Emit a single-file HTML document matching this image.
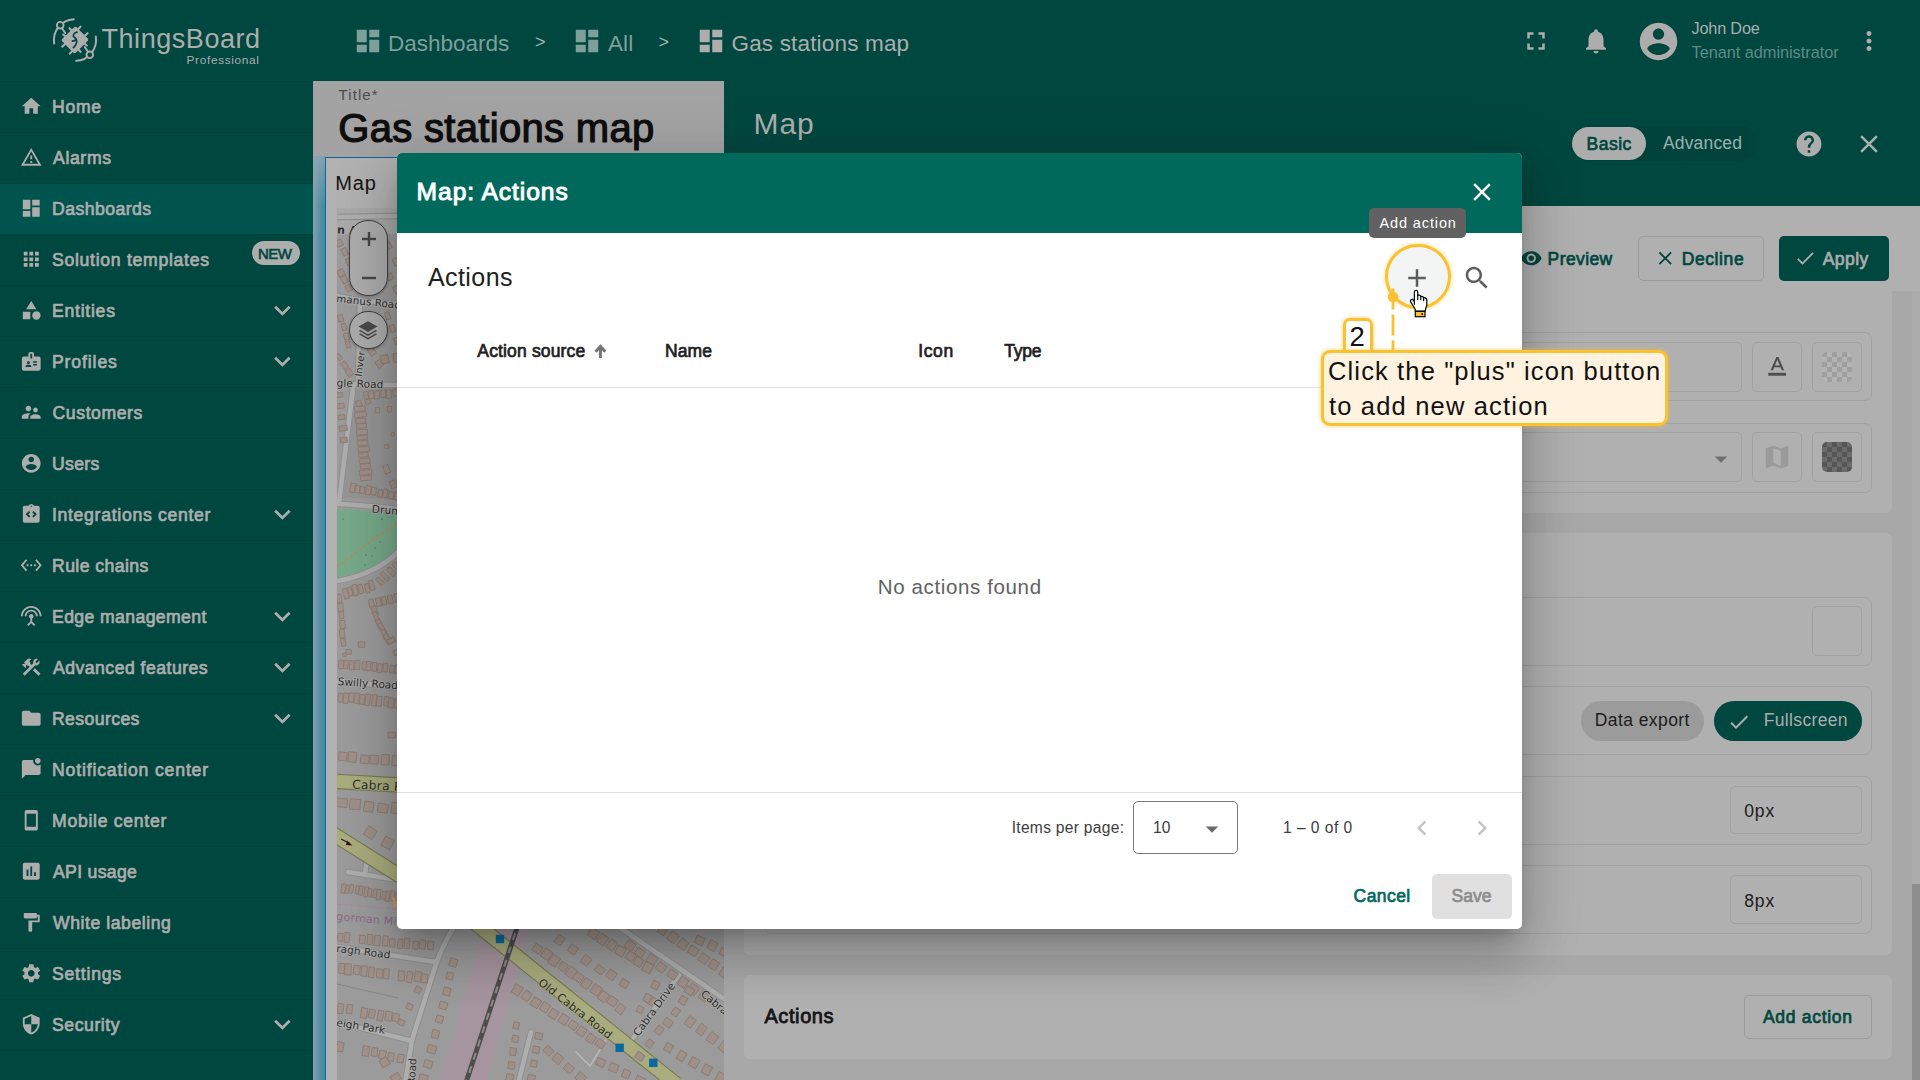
<!DOCTYPE html>
<html lang="en"><head><meta charset="utf-8"><title>ThingsBoard - Map: Actions</title>
<style>
*{box-sizing:border-box;margin:0;padding:0}
html,body{width:1920px;height:1080px;overflow:hidden;background:#a3a3a3;font-family:"Liberation Sans",sans-serif;}
.layer{position:absolute;left:0;top:0;width:1920px;height:1080px;overflow:hidden;}
.bx{position:absolute;}
.ic{position:absolute;overflow:visible;}
.t{position:absolute;white-space:pre;line-height:1;font-weight:400;text-decoration:none;}
.m{-webkit-text-stroke:0.04em currentColor;}
.m2{-webkit-text-stroke:0.03em currentColor;}
.b{font-weight:700;}
.widget{background:#b1b1b1;border:1.400px solid #0b68a3;}
.zoomctl{background:#acacac;border:1.200px solid #424242;border-radius:19px;box-shadow:0 1px 3px rgba(0,0,0,.3);}
.row{border:1px solid #a1a1a1;border-radius:7px;}
.fld{border:1px solid #a1a1a1;border-radius:5px;}
.checker{border-radius:5px;background-size:10px 10px;background-position:0 0;}
.checker.light{background-color:#9f9f9f;background-image:conic-gradient(#b4b4b4 25%,transparent 0 50%,#b4b4b4 0 75%,transparent 0);}
.checker.dark{background-color:#565656;background-image:conic-gradient(#6b6b6b 25%,transparent 0 50%,#6b6b6b 0 75%,transparent 0);}
.dialog{background:#fff;border-radius:5px;box-shadow:0 14px 19px -9px rgba(0,0,0,.2),0 30px 48px 4px rgba(0,0,0,.14),0 11px 58px 10px rgba(0,0,0,.12);}
</style></head>
<body>
<section class="layer leftpanel" style="clip-path:inset(81px 1196px 0 313px);"><div class="bx" style="left:313.00px;top:81.00px;width:411.00px;height:999.00px;background:#a3a3a3;"></div><span class="t" id="t0" style="left:338.60px;top:87.00px;font-size:15.00px;color:#4d4d4d;letter-spacing:1.062px;">Title*</span><h1 class="t m2" id="t1" style="left:338.23px;top:108.00px;font-size:40.00px;color:#0e0e0e;letter-spacing:0.318px;">Gas stations map</h1><div class="layer dashboard" style="clip-path:inset(156px 1196px 0 313px);"><div class="bx" style="left:313.00px;top:156.00px;width:12.50px;height:924.00px;background:linear-gradient(to right,#87a0ac,#5a91a5 50%,#328aa2);"></div><div class="bx" style="left:313.00px;top:156.00px;width:12.50px;height:50.00px;background:linear-gradient(to bottom,rgba(142,166,178,.85),rgba(142,166,178,0));"></div><div class="bx widget" style="left:324.80px;top:156.60px;width:575.20px;height:1043.40px;"></div><span class="t" id="t2" style="left:335.30px;top:173.00px;font-size:20.00px;color:#141414;letter-spacing:0.850px;">Map</span><svg class="ic mapsvg" viewBox="337 208 400 872" style="left:337px;top:208px;width:400px;height:872px;overflow:hidden;font-family:'DejaVu Sans','Liberation Sans',sans-serif;"><rect x="337" y="208" width="400" height="872" fill="#9b9b9b"/><path d="M356 390L397 388V500L343 498z" fill="#959595"/><rect x="337" y="208" width="400" height="26" fill="#a9a9a9"/><path d="M337 509L397 513V549C380 566 358 574 337 577z" fill="#77a98a"/><path d="M337 567L352 556L372 540L397 524" stroke="#c0875e" stroke-width="1.6" stroke-dasharray="3 2.5" fill="none"/><g fill="#5f9272"><circle cx="343.0" cy="519.0" r="1.1"/><circle cx="382.0" cy="519.0" r="1.1"/><circle cx="388.0" cy="568.0" r="1.1"/><circle cx="366.0" cy="555.0" r="1.1"/><circle cx="375.0" cy="548.0" r="1.1"/><circle cx="380.0" cy="542.0" r="1.1"/><circle cx="372.0" cy="556.0" r="1.1"/><circle cx="365.0" cy="565.0" r="1.1"/></g><path d="M487 920L531 920L487 1080L441 1080z" fill="#a6959f"/><g fill="none" stroke-linecap="round" stroke-linejoin="round"><g stroke="#8f8f8f" stroke-width="6.5"><path d="M337 217L397 216"/><path d="M337 296C355 300 378 303 397 304"/><path d="M360 300L358 384"/><path d="M337 384L397 385"/><path d="M353 388L339 502"/><path d="M337 504C360 505 380 507 397 509"/><path d="M337 581C362 577 384 566 397 553"/><path d="M337 681L397 687"/><path d="M348 872L392 879M367 858L365 875"/><path d="M337 947L436 962"/><path d="M455 925C446 940 440 952 436 964L412 1040L405 1084"/><path d="M337 1022L412 1041"/><path d="M616 925L730 1003"/><path d="M679 975L628 1045"/><path d="M531 1032L518 1084"/></g><g stroke="#aeaeae" stroke-width="4.6"><path d="M337 217L397 216"/><path d="M337 296C355 300 378 303 397 304"/><path d="M360 300L358 384"/><path d="M337 384L397 385"/><path d="M353 388L339 502"/><path d="M337 504C360 505 380 507 397 509"/><path d="M337 581C362 577 384 566 397 553"/><path d="M337 681L397 687"/><path d="M348 872L392 879M367 858L365 875"/><path d="M337 947L436 962"/><path d="M455 925C446 940 440 952 436 964L412 1040L405 1084"/><path d="M337 1022L412 1041"/><path d="M616 925L730 1003"/><path d="M679 975L628 1045"/><path d="M531 1032L518 1084"/></g><path d="M576 1052L590 1066L606 1040" stroke="#b8b8b8" stroke-width="1.6"/><path d="M337 984L398 998" stroke="#858585" stroke-width="1"/><path d="M337 904L397 909" stroke="#a98aa0" stroke-width="1.2" stroke-dasharray="4 3"/></g><g fill="none"><g stroke="#777b4d" stroke-width="15.5"><path d="M330 781L400 785"/><path d="M330 832L400 876"/><path d="M470 919L676 1084"/></g><g stroke="#a9ac7d" stroke-width="13.2"><path d="M330 781L400 785"/><path d="M330 832L400 876"/><path d="M470 919L676 1084"/></g></g><path d="M519.500 920L465.500 1084" stroke="#4d4d4d" stroke-width="5" fill="none"/><path d="M519.500 920L465.500 1084" stroke="#8c8c8c" stroke-width="2" stroke-dasharray="7 7" fill="none"/><g fill="#9f9089" stroke="#8c7c74" stroke-width="0.9"><rect x="336.2" y="240.2" width="6.4" height="6.1" transform="rotate(63.8 339.4 243.2)"/><rect x="341.1" y="249.1" width="6.9" height="5.2" transform="rotate(62.2 344.5 251.8)"/><rect x="346.2" y="258.3" width="6.6" height="6.2" transform="rotate(67.3 349.5 261.4)"/><rect x="337.7" y="269.4" width="6.4" height="6.6" transform="rotate(62.2 340.8 272.8)"/><rect x="340.7" y="277.0" width="7.4" height="5.4" transform="rotate(63.9 344.4 279.7)"/><rect x="345.6" y="285.5" width="6.4" height="5.2" transform="rotate(61.7 348.8 288.1)"/><rect x="384.3" y="242.7" width="7.1" height="5.9" transform="rotate(62.2 387.9 245.7)"/><rect x="392.8" y="258.6" width="7.1" height="6.0" transform="rotate(65.7 396.3 261.6)"/><rect x="386.4" y="273.8" width="6.5" height="5.9" transform="rotate(65.0 389.7 276.8)"/><rect x="393.4" y="286.0" width="7.2" height="6.5" transform="rotate(63.9 397.0 289.3)"/><rect x="337.1" y="315.8" width="7.1" height="5.1" transform="rotate(75.2 340.7 318.3)"/><rect x="340.4" y="324.8" width="7.2" height="4.3" transform="rotate(76.7 344.0 327.0)"/><rect x="343.1" y="334.1" width="6.7" height="4.8" transform="rotate(76.5 346.5 336.5)"/><rect x="344.7" y="342.3" width="6.5" height="4.3" transform="rotate(77.1 347.9 344.5)"/><rect x="383.8" y="313.6" width="7.5" height="4.4" transform="rotate(71.3 387.6 315.8)"/><rect x="388.9" y="326.2" width="7.5" height="4.7" transform="rotate(71.1 392.6 328.5)"/><rect x="393.4" y="338.5" width="6.5" height="4.5" transform="rotate(70.0 396.6 340.7)"/><rect x="335.6" y="355.0" width="6.7" height="4.3" transform="rotate(53.3 339.0 357.1)"/><rect x="341.0" y="362.7" width="7.3" height="5.0" transform="rotate(54.5 344.6 365.2)"/><rect x="345.6" y="369.9" width="7.4" height="5.6" transform="rotate(55.5 349.3 372.6)"/><rect x="367.7" y="348.3" width="8.2" height="6.1" transform="rotate(53.7 371.8 351.4)"/><rect x="375.8" y="360.8" width="7.3" height="6.0" transform="rotate(54.2 379.5 363.7)"/><rect x="381.0" y="355.1" width="7.5" height="8.3" transform="rotate(-11.6 384.8 359.2)"/><rect x="393.5" y="353.4" width="6.5" height="8.8" transform="rotate(-6.5 396.8 357.8)"/><rect x="363.9" y="391.8" width="4.2" height="7.1" transform="rotate(-7.3 366.0 395.3)"/><rect x="368.8" y="390.9" width="5.0" height="7.6" transform="rotate(-8.0 371.3 394.6)"/><rect x="374.3" y="390.7" width="5.0" height="8.3" transform="rotate(-4.7 376.8 394.8)"/><rect x="380.8" y="389.9" width="4.9" height="7.6" transform="rotate(-4.2 383.2 393.7)"/><rect x="386.2" y="390.0" width="5.0" height="8.3" transform="rotate(-4.1 388.8 394.1)"/><rect x="393.1" y="389.0" width="4.6" height="7.2" transform="rotate(-8.7 395.4 392.6)"/><rect x="356.1" y="400.8" width="5.2" height="5.7" transform="rotate(-20.9 358.6 403.6)"/><rect x="365.3" y="399.4" width="4.9" height="4.6" transform="rotate(-22.2 367.8 401.7)"/><rect x="375.4" y="407.4" width="4.3" height="5.5" transform="rotate(-0.1 377.5 410.2)"/><rect x="387.4" y="406.5" width="4.1" height="5.6" transform="rotate(1.7 389.5 409.3)"/><rect x="357.5" y="403.5" width="4.9" height="10.4" transform="rotate(86.8 360.0 408.7)"/><rect x="357.9" y="408.8" width="5.0" height="11.7" transform="rotate(83.1 360.4 414.7)"/><rect x="358.2" y="416.0" width="4.9" height="9.8" transform="rotate(87.0 360.7 420.9)"/><rect x="359.3" y="421.2" width="4.6" height="9.8" transform="rotate(82.1 361.7 426.1)"/><rect x="359.7" y="426.6" width="5.0" height="10.8" transform="rotate(87.3 362.1 432.0)"/><rect x="360.0" y="432.4" width="4.4" height="10.1" transform="rotate(85.5 362.2 437.5)"/><rect x="360.4" y="437.9" width="5.0" height="10.5" transform="rotate(84.8 362.9 443.1)"/><rect x="361.4" y="443.7" width="5.0" height="11.0" transform="rotate(85.2 363.9 449.2)"/><rect x="361.4" y="450.3" width="4.3" height="9.4" transform="rotate(86.8 363.5 454.9)"/><rect x="362.1" y="455.8" width="4.7" height="10.4" transform="rotate(85.1 364.5 461.0)"/><rect x="363.0" y="461.0" width="4.7" height="10.2" transform="rotate(83.7 365.3 466.1)"/><rect x="363.1" y="466.1" width="4.8" height="12.4" transform="rotate(84.7 365.5 472.3)"/><rect x="363.6" y="472.6" width="4.8" height="10.8" transform="rotate(85.2 366.0 478.0)"/><rect x="391.1" y="432.6" width="3.2" height="3.4" transform="rotate(-1.4 392.7 434.3)"/><rect x="384.4" y="444.8" width="4.6" height="3.5" transform="rotate(-0.3 386.7 446.5)"/><rect x="382.4" y="466.6" width="8.3" height="5.4" transform="rotate(69.2 386.6 469.3)"/><rect x="389.6" y="481.5" width="7.4" height="5.6" transform="rotate(69.6 393.3 484.3)"/><rect x="350.4" y="483.2" width="4.6" height="9.2" transform="rotate(12.3 352.7 487.8)"/><rect x="355.2" y="485.4" width="4.5" height="7.3" transform="rotate(9.2 357.4 489.0)"/><rect x="360.0" y="486.7" width="4.5" height="6.8" transform="rotate(9.3 362.2 490.1)"/><rect x="366.0" y="486.0" width="5.0" height="8.7" transform="rotate(13.1 368.5 490.3)"/><rect x="371.2" y="487.5" width="4.9" height="7.4" transform="rotate(8.1 373.6 491.3)"/><rect x="378.0" y="489.9" width="4.4" height="7.2" transform="rotate(12.8 380.2 493.5)"/><rect x="383.2" y="489.1" width="4.2" height="8.5" transform="rotate(9.9 385.3 493.3)"/><rect x="388.8" y="491.7" width="4.9" height="7.0" transform="rotate(12.4 391.2 495.2)"/><rect x="394.4" y="491.9" width="4.5" height="8.1" transform="rotate(12.9 396.6 495.9)"/><rect x="337.0" y="392.0" width="4.7" height="6.2" transform="rotate(82.9 339.4 395.0)"/><rect x="338.1" y="402.2" width="4.8" height="7.5" transform="rotate(83.7 340.5 405.9)"/><rect x="339.2" y="414.0" width="4.5" height="6.5" transform="rotate(82.0 341.5 417.3)"/><rect x="340.6" y="424.3" width="5.0" height="7.9" transform="rotate(82.6 343.1 428.3)"/><rect x="341.2" y="436.6" width="5.3" height="6.8" transform="rotate(85.0 343.9 440.0)"/><rect x="343.4" y="588.4" width="4.7" height="10.6" transform="rotate(-15.7 345.8 593.7)"/><rect x="348.1" y="587.3" width="4.1" height="8.7" transform="rotate(-15.1 350.2 591.7)"/><rect x="352.9" y="584.6" width="4.7" height="11.1" transform="rotate(-15.5 355.3 590.1)"/><rect x="358.6" y="584.4" width="4.4" height="9.0" transform="rotate(-16.8 360.8 588.9)"/><rect x="365.1" y="583.7" width="4.4" height="9.2" transform="rotate(-13.7 367.3 588.4)"/><rect x="369.6" y="580.2" width="4.3" height="9.9" transform="rotate(-16.5 371.8 585.2)"/><rect x="377.9" y="576.8" width="4.2" height="8.8" transform="rotate(-43.9 380.0 581.2)"/><rect x="382.8" y="571.2" width="4.2" height="10.3" transform="rotate(-43.1 384.9 576.4)"/><rect x="389.2" y="566.8" width="4.7" height="9.7" transform="rotate(-44.3 391.6 571.7)"/><rect x="394.2" y="562.0" width="4.5" height="8.6" transform="rotate(-41.3 396.4 566.4)"/><rect x="335.0" y="596.1" width="8.5" height="4.5" transform="rotate(83.7 339.2 598.4)"/><rect x="336.3" y="604.7" width="8.5" height="5.1" transform="rotate(85.9 340.5 607.3)"/><rect x="337.7" y="612.9" width="7.2" height="4.4" transform="rotate(82.7 341.3 615.2)"/><rect x="338.4" y="621.9" width="8.2" height="5.2" transform="rotate(84.6 342.5 624.5)"/><rect x="338.0" y="631.2" width="8.4" height="5.0" transform="rotate(83.7 342.2 633.7)"/><rect x="339.5" y="640.2" width="7.6" height="4.4" transform="rotate(82.1 343.3 642.4)"/><rect x="369.0" y="599.4" width="5.0" height="8.0" transform="rotate(-12.0 371.5 603.4)"/><rect x="376.2" y="598.0" width="4.7" height="8.3" transform="rotate(-13.8 378.5 602.2)"/><rect x="381.9" y="596.8" width="4.4" height="8.2" transform="rotate(-14.2 384.1 600.9)"/><rect x="388.0" y="595.3" width="4.8" height="8.4" transform="rotate(-12.6 390.4 599.5)"/><rect x="394.8" y="593.5" width="4.2" height="8.9" transform="rotate(-13.1 396.9 597.9)"/><rect x="369.7" y="608.8" width="9.9" height="4.8" transform="rotate(67.9 374.7 611.2)"/><rect x="370.8" y="615.1" width="10.9" height="4.0" transform="rotate(65.6 376.2 617.1)"/><rect x="374.6" y="621.5" width="9.3" height="4.8" transform="rotate(65.1 379.2 623.9)"/><rect x="376.7" y="626.2" width="10.8" height="4.4" transform="rotate(62.2 382.1 628.4)"/><rect x="379.6" y="632.4" width="9.6" height="3.9" transform="rotate(64.2 384.4 634.3)"/><rect x="382.3" y="636.8" width="10.5" height="4.8" transform="rotate(62.8 387.5 639.2)"/><rect x="388.9" y="636.8" width="4.8" height="7.7" transform="rotate(62.8 391.3 640.6)"/><rect x="394.7" y="648.0" width="4.9" height="7.5" transform="rotate(60.7 397.1 651.8)"/><rect x="358.3" y="641.9" width="6.5" height="5.5" transform="rotate(-1.4 361.5 644.7)"/><rect x="345.8" y="649.6" width="5.5" height="4.5" transform="rotate(1.9 348.5 651.8)"/><rect x="342.6" y="653.1" width="4.0" height="3.2" transform="rotate(-2.7 344.7 654.7)"/><rect x="338.6" y="660.2" width="4.7" height="8.4" transform="rotate(2.4 340.9 664.4)"/><rect x="343.8" y="660.2" width="4.5" height="8.5" transform="rotate(6.5 346.0 664.5)"/><rect x="349.6" y="660.7" width="4.4" height="9.2" transform="rotate(4.5 351.8 665.2)"/><rect x="354.8" y="660.5" width="5.0" height="9.0" transform="rotate(3.4 357.3 665.0)"/><rect x="362.1" y="661.8" width="4.3" height="8.2" transform="rotate(2.6 364.2 665.9)"/><rect x="366.2" y="661.5" width="4.4" height="9.2" transform="rotate(7.4 368.3 666.1)"/><rect x="372.1" y="662.5" width="4.6" height="8.7" transform="rotate(4.1 374.5 666.9)"/><rect x="377.7" y="663.7" width="4.3" height="9.0" transform="rotate(5.9 379.8 668.2)"/><rect x="383.2" y="663.3" width="4.4" height="8.7" transform="rotate(4.8 385.3 667.6)"/><rect x="389.9" y="665.2" width="4.2" height="7.7" transform="rotate(6.4 392.0 669.1)"/><rect x="394.9" y="664.8" width="4.1" height="8.7" transform="rotate(7.7 397.0 669.1)"/><rect x="338.3" y="693.3" width="4.6" height="8.8" transform="rotate(3.9 340.6 697.8)"/><rect x="343.5" y="693.1" width="5.0" height="10.4" transform="rotate(7.6 346.0 698.3)"/><rect x="348.9" y="692.9" width="5.1" height="9.2" transform="rotate(8.5 351.5 697.5)"/><rect x="354.5" y="693.0" width="4.6" height="10.4" transform="rotate(7.2 356.8 698.2)"/><rect x="359.7" y="694.6" width="4.9" height="9.7" transform="rotate(4.4 362.1 699.4)"/><rect x="365.3" y="694.0" width="4.8" height="11.4" transform="rotate(6.9 367.7 699.7)"/><rect x="371.9" y="694.5" width="4.6" height="11.4" transform="rotate(7.2 374.2 700.2)"/><rect x="376.7" y="696.3" width="5.0" height="9.8" transform="rotate(4.6 379.1 701.2)"/><rect x="384.1" y="696.6" width="4.4" height="9.5" transform="rotate(5.5 386.3 701.4)"/><rect x="388.3" y="697.9" width="5.0" height="10.0" transform="rotate(4.2 390.8 702.9)"/><rect x="394.4" y="698.9" width="4.5" height="9.2" transform="rotate(7.6 396.7 703.5)"/><rect x="388.0" y="732.2" width="7.5" height="5.5" transform="rotate(-0.5 391.7 735.0)"/><rect x="338.6" y="752.3" width="8.3" height="8.2" transform="rotate(7.0 342.7 756.4)"/><rect x="348.1" y="752.1" width="8.3" height="10.1" transform="rotate(6.5 352.3 757.1)"/><rect x="360.7" y="755.2" width="8.2" height="8.2" transform="rotate(6.8 364.8 759.3)"/><rect x="370.1" y="755.3" width="8.3" height="8.7" transform="rotate(3.1 374.3 759.7)"/><rect x="381.1" y="754.7" width="8.2" height="10.2" transform="rotate(1.9 385.2 759.8)"/><rect x="392.0" y="755.8" width="9.0" height="9.9" transform="rotate(3.8 396.5 760.8)"/><rect x="336.5" y="798.5" width="10.8" height="8.6" transform="rotate(5.4 342.0 802.8)"/><rect x="349.7" y="799.2" width="10.6" height="10.3" transform="rotate(3.5 355.0 804.4)"/><rect x="364.0" y="801.6" width="9.5" height="10.2" transform="rotate(8.6 368.8 806.7)"/><rect x="377.8" y="803.8" width="10.2" height="8.8" transform="rotate(7.5 382.9 808.2)"/><rect x="391.4" y="802.9" width="10.5" height="10.7" transform="rotate(7.0 396.6 808.2)"/><rect x="365.3" y="827.5" width="10.0" height="10.2" transform="rotate(33.2 370.2 832.6)"/><rect x="382.6" y="837.8" width="10.0" height="10.2" transform="rotate(28.6 387.6 842.9)"/><rect x="341.4" y="883.9" width="4.0" height="9.3" transform="rotate(8.4 343.4 888.5)"/><rect x="345.5" y="885.1" width="3.5" height="8.2" transform="rotate(11.0 347.3 889.2)"/><rect x="349.4" y="884.5" width="3.8" height="8.5" transform="rotate(12.3 351.3 888.8)"/><rect x="355.5" y="885.9" width="3.5" height="7.9" transform="rotate(9.5 357.3 889.9)"/><rect x="359.0" y="885.9" width="3.7" height="9.3" transform="rotate(10.5 360.9 890.6)"/><rect x="364.3" y="887.1" width="3.5" height="9.9" transform="rotate(8.2 366.1 892.0)"/><rect x="368.0" y="888.7" width="3.6" height="8.3" transform="rotate(7.9 369.8 892.9)"/><rect x="373.3" y="889.0" width="3.7" height="8.7" transform="rotate(12.4 375.1 893.4)"/><rect x="376.6" y="889.3" width="3.9" height="10.3" transform="rotate(7.1 378.6 894.5)"/><rect x="382.0" y="891.4" width="4.1" height="7.8" transform="rotate(8.2 384.0 895.3)"/><rect x="385.6" y="891.2" width="3.9" height="10.2" transform="rotate(8.7 387.5 896.3)"/><rect x="390.4" y="890.8" width="4.0" height="10.2" transform="rotate(7.1 392.4 895.9)"/><rect x="395.3" y="892.5" width="3.7" height="8.0" transform="rotate(7.7 397.2 896.5)"/><rect x="337.6" y="933.4" width="5.2" height="7.7" transform="rotate(4.7 340.2 937.2)"/><rect x="344.4" y="932.6" width="5.2" height="9.8" transform="rotate(6.0 347.0 937.4)"/><rect x="359.5" y="935.4" width="5.7" height="7.9" transform="rotate(3.7 362.3 939.3)"/><rect x="367.2" y="934.5" width="5.3" height="10.2" transform="rotate(4.6 369.9 939.7)"/><rect x="374.3" y="935.4" width="5.9" height="10.3" transform="rotate(4.9 377.3 940.6)"/><rect x="382.9" y="936.0" width="5.0" height="10.1" transform="rotate(5.3 385.4 941.0)"/><rect x="389.6" y="938.8" width="5.5" height="8.1" transform="rotate(2.8 392.3 942.9)"/><rect x="397.7" y="939.0" width="5.0" height="9.3" transform="rotate(4.9 400.2 943.7)"/><rect x="404.2" y="938.3" width="5.5" height="10.1" transform="rotate(3.4 406.9 943.4)"/><rect x="412.9" y="941.3" width="5.2" height="8.0" transform="rotate(8.4 415.5 945.2)"/><rect x="419.5" y="940.2" width="6.0" height="8.7" transform="rotate(8.1 422.5 944.5)"/><rect x="427.6" y="941.3" width="5.8" height="8.2" transform="rotate(5.1 430.5 945.5)"/><rect x="338.7" y="963.6" width="5.7" height="9.7" transform="rotate(6.2 341.5 968.5)"/><rect x="344.9" y="963.8" width="6.3" height="11.2" transform="rotate(3.4 348.0 969.4)"/><rect x="353.5" y="965.5" width="6.4" height="8.9" transform="rotate(6.7 356.7 969.9)"/><rect x="361.2" y="966.0" width="5.9" height="10.2" transform="rotate(5.7 364.1 971.1)"/><rect x="368.7" y="967.0" width="5.4" height="10.4" transform="rotate(6.1 371.5 972.2)"/><rect x="376.6" y="969.0" width="5.9" height="9.0" transform="rotate(6.0 379.6 973.5)"/><rect x="383.5" y="968.9" width="5.5" height="9.8" transform="rotate(6.2 386.2 973.8)"/><rect x="398.3" y="970.9" width="6.3" height="10.0" transform="rotate(3.4 401.4 975.9)"/><rect x="406.8" y="971.5" width="5.6" height="11.1" transform="rotate(9.1 409.5 977.1)"/><rect x="414.6" y="971.7" width="6.6" height="10.0" transform="rotate(8.9 417.9 976.7)"/><rect x="421.2" y="974.1" width="6.5" height="8.7" transform="rotate(5.2 424.5 978.5)"/><rect x="337.6" y="1003.7" width="5.7" height="9.9" transform="rotate(8.2 340.5 1008.6)"/><rect x="346.7" y="1004.5" width="5.7" height="9.0" transform="rotate(9.2 349.5 1009.0)"/><rect x="360.9" y="1008.0" width="6.2" height="10.1" transform="rotate(8.3 364.0 1013.0)"/><rect x="368.7" y="1009.5" width="6.2" height="8.6" transform="rotate(12.5 371.8 1013.8)"/><rect x="377.7" y="1010.6" width="5.5" height="10.3" transform="rotate(11.1 380.4 1015.8)"/><rect x="385.3" y="1011.6" width="6.6" height="9.2" transform="rotate(9.5 388.6 1016.2)"/><rect x="392.8" y="1013.6" width="6.3" height="7.8" transform="rotate(12.2 395.9 1017.5)"/><rect x="336.9" y="1042.1" width="6.6" height="9.4" transform="rotate(10.2 340.2 1046.8)"/><rect x="362.6" y="1046.0" width="6.5" height="10.1" transform="rotate(9.1 365.9 1051.0)"/><rect x="371.6" y="1047.8" width="5.9" height="8.6" transform="rotate(8.9 374.5 1052.1)"/><rect x="379.1" y="1050.6" width="6.6" height="8.2" transform="rotate(12.1 382.4 1054.7)"/><rect x="387.8" y="1053.0" width="6.2" height="8.1" transform="rotate(8.9 390.8 1057.0)"/><rect x="397.4" y="1054.3" width="6.4" height="8.4" transform="rotate(8.4 400.6 1058.5)"/><rect x="415.0" y="986.8" width="6.2" height="5.9" transform="rotate(119.2 418.1 989.8)"/><rect x="406.9" y="1003.6" width="5.5" height="6.1" transform="rotate(116.0 409.6 1006.6)"/><rect x="398.6" y="1019.4" width="5.4" height="6.1" transform="rotate(119.2 401.3 1022.4)"/><rect x="380.5" y="1058.0" width="8.0" height="8.3" transform="rotate(57.4 384.5 1062.2)"/><rect x="392.1" y="1073.2" width="7.3" height="8.9" transform="rotate(57.2 395.7 1077.7)"/><rect x="449.3" y="958.8" width="7.9" height="7.4" transform="rotate(106.0 453.2 962.6)"/><rect x="446.3" y="972.6" width="7.1" height="6.5" transform="rotate(103.5 449.8 975.9)"/><rect x="442.9" y="988.1" width="7.8" height="7.0" transform="rotate(104.8 446.8 991.6)"/><rect x="439.6" y="1001.6" width="7.1" height="7.8" transform="rotate(107.3 443.2 1005.5)"/><rect x="436.0" y="1015.8" width="7.1" height="6.9" transform="rotate(106.0 439.6 1019.2)"/><rect x="431.6" y="1030.7" width="8.1" height="7.1" transform="rotate(102.9 435.6 1034.2)"/><rect x="427.8" y="1045.0" width="7.7" height="8.6" transform="rotate(104.3 431.7 1049.3)"/><rect x="424.4" y="1060.1" width="7.4" height="8.0" transform="rotate(104.9 428.1 1064.1)"/><rect x="420.1" y="1074.0" width="6.9" height="8.4" transform="rotate(102.4 423.5 1078.2)"/><rect x="533.3" y="944.7" width="8.2" height="8.0" transform="rotate(33.4 537.4 948.7)"/><rect x="542.1" y="949.4" width="8.8" height="9.6" transform="rotate(33.6 546.5 954.2)"/><rect x="549.7" y="955.5" width="9.0" height="10.1" transform="rotate(33.6 554.2 960.5)"/><rect x="559.3" y="962.6" width="7.8" height="8.2" transform="rotate(33.9 563.3 966.7)"/><rect x="567.0" y="967.6" width="8.7" height="9.9" transform="rotate(37.0 571.4 972.5)"/><rect x="573.9" y="973.3" width="8.9" height="8.2" transform="rotate(35.1 578.4 977.4)"/><rect x="582.4" y="978.8" width="8.1" height="9.6" transform="rotate(35.4 586.4 983.6)"/><rect x="591.6" y="985.3" width="9.1" height="9.3" transform="rotate(33.4 596.1 990.0)"/><rect x="599.4" y="991.7" width="8.2" height="9.6" transform="rotate(36.4 603.5 996.4)"/><rect x="607.9" y="997.3" width="9.0" height="8.1" transform="rotate(33.2 612.4 1001.3)"/><rect x="616.6" y="1004.3" width="7.7" height="9.0" transform="rotate(36.1 620.4 1008.8)"/><rect x="555.6" y="935.6" width="7.8" height="8.8" transform="rotate(35.4 559.5 940.0)"/><rect x="568.8" y="945.5" width="8.3" height="8.0" transform="rotate(34.5 573.0 949.5)"/><rect x="581.8" y="956.1" width="8.3" height="8.7" transform="rotate(37.6 586.0 960.5)"/><rect x="595.5" y="966.3" width="8.6" height="7.0" transform="rotate(39.2 599.8 969.8)"/><rect x="588.9" y="929.1" width="9.2" height="9.0" transform="rotate(31.5 593.5 933.6)"/><rect x="598.3" y="934.8" width="8.6" height="9.7" transform="rotate(33.7 602.6 939.6)"/><rect x="607.8" y="940.1" width="7.9" height="9.9" transform="rotate(33.2 611.8 945.1)"/><rect x="616.0" y="946.3" width="9.0" height="9.2" transform="rotate(30.0 620.5 950.9)"/><rect x="626.6" y="952.0" width="8.0" height="8.5" transform="rotate(33.4 630.6 956.2)"/><rect x="634.4" y="957.5" width="8.1" height="8.5" transform="rotate(32.3 638.4 961.8)"/><rect x="643.1" y="962.7" width="9.3" height="9.6" transform="rotate(29.8 647.7 967.5)"/><rect x="607.0" y="970.5" width="8.8" height="8.7" transform="rotate(34.7 611.4 974.8)"/><rect x="620.5" y="979.9" width="7.4" height="7.3" transform="rotate(32.7 624.2 983.6)"/><rect x="646.5" y="996.2" width="8.0" height="8.3" transform="rotate(33.1 650.5 1000.3)"/><rect x="513.0" y="985.1" width="8.4" height="9.5" transform="rotate(32.6 517.2 989.8)"/><rect x="522.8" y="991.3" width="7.6" height="9.1" transform="rotate(35.3 526.6 995.9)"/><rect x="531.6" y="998.1" width="8.3" height="8.9" transform="rotate(32.8 535.8 1002.6)"/><rect x="540.9" y="1002.7" width="7.9" height="9.2" transform="rotate(34.3 544.9 1007.4)"/><rect x="549.5" y="1009.5" width="7.9" height="8.8" transform="rotate(32.5 553.5 1013.9)"/><rect x="559.7" y="1014.9" width="8.2" height="9.2" transform="rotate(32.4 563.8 1019.5)"/><rect x="569.1" y="1021.4" width="8.1" height="7.6" transform="rotate(34.7 573.1 1025.3)"/><rect x="577.5" y="1027.1" width="8.1" height="8.6" transform="rotate(34.4 581.6 1031.4)"/><rect x="587.0" y="1034.4" width="8.0" height="8.3" transform="rotate(35.7 591.0 1038.5)"/><rect x="596.1" y="1040.1" width="8.4" height="7.5" transform="rotate(36.0 600.3 1043.8)"/><rect x="512.9" y="1022.9" width="6.9" height="5.6" transform="rotate(98.3 516.3 1025.6)"/><rect x="512.0" y="1035.8" width="6.7" height="6.0" transform="rotate(100.2 515.3 1038.8)"/><rect x="509.3" y="1048.4" width="7.4" height="6.3" transform="rotate(97.0 513.0 1051.6)"/><rect x="507.8" y="1062.3" width="7.2" height="6.4" transform="rotate(99.1 511.4 1065.5)"/><rect x="506.1" y="1074.2" width="7.2" height="7.1" transform="rotate(100.6 509.7 1077.8)"/><rect x="535.4" y="1032.5" width="6.5" height="7.2" transform="rotate(99.9 538.7 1036.1)"/><rect x="532.6" y="1046.6" width="6.7" height="6.4" transform="rotate(98.9 536.0 1049.8)"/><rect x="530.7" y="1060.6" width="6.6" height="6.1" transform="rotate(100.7 534.0 1063.6)"/><rect x="527.8" y="1074.6" width="6.8" height="7.3" transform="rotate(102.9 531.2 1078.3)"/><rect x="544.3" y="1047.1" width="8.5" height="7.1" transform="rotate(43.2 548.5 1050.6)"/><rect x="553.5" y="1054.4" width="8.7" height="8.4" transform="rotate(39.7 557.9 1058.6)"/><rect x="564.5" y="1064.4" width="8.4" height="7.6" transform="rotate(39.1 568.8 1068.2)"/><rect x="576.2" y="1073.3" width="8.6" height="8.3" transform="rotate(42.9 580.5 1077.5)"/><rect x="596.4" y="1058.8" width="8.5" height="7.3" transform="rotate(25.4 600.6 1062.5)"/><rect x="609.4" y="1063.8" width="8.6" height="8.1" transform="rotate(22.8 613.7 1067.9)"/><rect x="622.4" y="1070.0" width="7.3" height="7.9" transform="rotate(22.1 626.1 1074.0)"/><rect x="635.7" y="1076.7" width="8.6" height="6.8" transform="rotate(26.3 640.0 1080.1)"/><rect x="625.6" y="941.2" width="9.1" height="8.2" transform="rotate(34.3 630.1 945.3)"/><rect x="635.6" y="948.9" width="8.7" height="7.3" transform="rotate(35.4 639.9 952.6)"/><rect x="647.3" y="955.2" width="9.3" height="8.5" transform="rotate(34.7 651.9 959.5)"/><rect x="656.8" y="963.4" width="8.7" height="8.1" transform="rotate(36.9 661.1 967.5)"/><rect x="668.0" y="970.7" width="9.0" height="7.8" transform="rotate(34.4 672.5 974.5)"/><rect x="679.1" y="977.7" width="8.1" height="9.3" transform="rotate(34.2 683.2 982.4)"/><rect x="688.7" y="984.8" width="9.3" height="8.9" transform="rotate(36.5 693.4 989.3)"/><rect x="699.8" y="991.9" width="8.6" height="8.8" transform="rotate(36.5 704.1 996.3)"/><rect x="658.7" y="925.8" width="7.7" height="8.5" transform="rotate(31.2 662.6 930.1)"/><rect x="668.6" y="932.3" width="8.8" height="9.8" transform="rotate(36.6 673.0 937.2)"/><rect x="678.4" y="939.6" width="8.8" height="9.3" transform="rotate(35.2 682.9 944.2)"/><rect x="688.8" y="947.0" width="8.9" height="7.9" transform="rotate(32.2 693.3 950.9)"/><rect x="699.4" y="954.3" width="8.8" height="8.6" transform="rotate(36.1 703.8 958.7)"/><rect x="709.7" y="960.2" width="8.2" height="8.8" transform="rotate(33.0 713.8 964.6)"/><rect x="720.4" y="968.1" width="7.7" height="9.2" transform="rotate(31.4 724.2 972.7)"/><rect x="651.7" y="981.7" width="7.6" height="6.9" transform="rotate(118.0 655.5 985.1)"/><rect x="643.8" y="994.7" width="7.7" height="6.9" transform="rotate(120.4 647.6 998.2)"/><rect x="637.0" y="1006.5" width="6.5" height="6.0" transform="rotate(118.0 640.2 1009.5)"/><rect x="686.0" y="986.6" width="6.9" height="8.3" transform="rotate(122.3 689.4 990.7)"/><rect x="679.1" y="996.9" width="7.9" height="6.8" transform="rotate(121.8 683.0 1000.3)"/><rect x="671.8" y="1008.6" width="7.8" height="6.6" transform="rotate(125.3 675.7 1011.9)"/><rect x="664.4" y="1018.4" width="7.1" height="8.5" transform="rotate(125.8 667.9 1022.7)"/><rect x="655.2" y="1027.0" width="8.0" height="6.6" transform="rotate(126.4 659.2 1030.2)"/><rect x="645.7" y="1040.3" width="7.5" height="6.5" transform="rotate(126.8 649.5 1043.6)"/><rect x="636.4" y="1052.2" width="7.0" height="8.2" transform="rotate(126.7 639.9 1056.3)"/><rect x="686.3" y="1017.0" width="7.8" height="9.8" transform="rotate(37.9 690.2 1021.9)"/><rect x="697.8" y="1024.5" width="7.3" height="10.3" transform="rotate(36.4 701.4 1029.7)"/><rect x="708.0" y="1033.2" width="8.8" height="9.9" transform="rotate(35.8 712.4 1038.2)"/><rect x="720.0" y="1041.9" width="7.8" height="9.5" transform="rotate(35.8 723.9 1046.6)"/><rect x="664.9" y="1043.7" width="7.2" height="7.9" transform="rotate(29.5 668.5 1047.7)"/><rect x="677.9" y="1051.4" width="7.3" height="9.3" transform="rotate(31.9 681.5 1056.1)"/><rect x="689.8" y="1058.0" width="8.6" height="9.3" transform="rotate(31.1 694.1 1062.6)"/><rect x="702.7" y="1065.2" width="8.1" height="9.3" transform="rotate(28.2 706.8 1069.8)"/><rect x="716.6" y="1073.1" width="8.2" height="9.0" transform="rotate(29.8 720.7 1077.6)"/><rect x="695.4" y="936.5" width="8.5" height="7.9" transform="rotate(24.1 699.6 940.4)"/><rect x="708.4" y="941.1" width="8.1" height="9.0" transform="rotate(28.9 712.4 945.6)"/><rect x="720.2" y="948.5" width="7.5" height="7.3" transform="rotate(24.6 724.0 952.1)"/></g><path d="M341 839L350 843.500" stroke="#2a1a1a" stroke-width="1.2"/><path d="M347 840.500L352.500 845.500L346 845z" fill="#3a1212"/><path d="M392 894L399 906L394 908z" fill="#c49a6c"/><text font-weight="bold" x="337.0" y="233.5" transform="rotate(2.0 337.0 233.5)" font-size="11.0" fill="#2e2e2e" letter-spacing="0.30" stroke="#adadad" stroke-width="1.6" paint-order="stroke" stroke-linejoin="round">n A</text><text x="336.0" y="302.0" transform="rotate(6.0 336.0 302.0)" font-size="10.3" fill="#2e2e2e" letter-spacing="0.10" stroke="#adadad" stroke-width="1.6" paint-order="stroke" stroke-linejoin="round">manus Road</text><text x="361.5" y="377.0" transform="rotate(-82.0 361.5 377.0)" font-size="9.8" fill="#2e2e2e" letter-spacing="0.10" stroke="#adadad" stroke-width="1.6" paint-order="stroke" stroke-linejoin="round">Inver</text><text x="336.5" y="386.5" transform="rotate(2.0 336.5 386.5)" font-size="10.6" fill="#2e2e2e" letter-spacing="0.10" stroke="#adadad" stroke-width="1.6" paint-order="stroke" stroke-linejoin="round">gle Road</text><text x="371.5" y="512.5" transform="rotate(5.0 371.5 512.5)" font-size="10.6" fill="#2e2e2e" letter-spacing="0.10" stroke="#adadad" stroke-width="1.6" paint-order="stroke" stroke-linejoin="round">Drum</text><text x="337.5" y="685.0" transform="rotate(4.0 337.5 685.0)" font-size="10.6" fill="#2e2e2e" letter-spacing="0.00" stroke="#adadad" stroke-width="1.6" paint-order="stroke" stroke-linejoin="round">Swilly Road</text><text x="352.0" y="788.5" transform="rotate(3.0 352.0 788.5)" font-size="12.2" fill="#2e2e2e" letter-spacing="0.30" stroke="#a9ac7d" stroke-width="1.6" paint-order="stroke" stroke-linejoin="round">Cabra R</text><text x="336.0" y="920.0" transform="rotate(5.0 336.0 920.0)" font-size="11.0" fill="#8f6a88" letter-spacing="0.25" stroke="#9b9b9b" stroke-width="1.6" paint-order="stroke" stroke-linejoin="round">gorman Middle</text><text x="336.0" y="952.0" transform="rotate(7.0 336.0 952.0)" font-size="10.6" fill="#2e2e2e" letter-spacing="0.00" stroke="#adadad" stroke-width="1.6" paint-order="stroke" stroke-linejoin="round">ragh Road</text><text x="336.0" y="1026.0" transform="rotate(9.0 336.0 1026.0)" font-size="10.6" fill="#2e2e2e" letter-spacing="0.00" stroke="#adadad" stroke-width="1.6" paint-order="stroke" stroke-linejoin="round">eigh Park</text><text x="414.0" y="1095.0" transform="rotate(-86.0 414.0 1095.0)" font-size="10.6" fill="#2e2e2e" letter-spacing="0.00" stroke="#adadad" stroke-width="1.6" paint-order="stroke" stroke-linejoin="round">n Road</text><text x="537.5" y="984.0" transform="rotate(38.0 537.5 984.0)" font-size="11.2" fill="#2e2e2e" letter-spacing="0.20" stroke="#a9ac7d" stroke-width="1.6" paint-order="stroke" stroke-linejoin="round">Old Cabra Road</text><text x="638.5" y="1037.0" transform="rotate(-54.0 638.5 1037.0)" font-size="10.6" fill="#2e2e2e" letter-spacing="0.00" stroke="#adadad" stroke-width="1.6" paint-order="stroke" stroke-linejoin="round">Cabra Drive</text><text x="700.0" y="995.0" transform="rotate(40.0 700.0 995.0)" font-size="10.6" fill="#2e2e2e" letter-spacing="0.00" stroke="#adadad" stroke-width="1.6" paint-order="stroke" stroke-linejoin="round">Cabra</text><g fill="#0a6aa0"><rect x="495.8" y="934.8" width="8.4" height="8.4"/><rect x="615.5" y="1043.6" width="8.400" height="8.400"/><rect x="649.100" y="1058.600" width="8.400" height="8.400"/></g></svg><div class="bx zoomctl" style="left:349.40px;top:220.00px;width:38.40px;height:76.20px;"></div><div class="bx zoomctl" style="left:349.40px;top:310.50px;width:38.40px;height:38.50px;"></div><svg class="ic" viewBox="0 0 20 20" style="left:358.9px;top:229.4px;width:20px;height:20px;"><path d="M10 3v14M3 10h14" stroke="#474747" stroke-width="2.4" fill="none"/></svg><svg class="ic" viewBox="0 0 20 20" style="left:358.9px;top:267.8px;width:20px;height:20px;"><path d="M3 10h14" stroke="#474747" stroke-width="2.4" fill="none"/></svg><svg class="ic" viewBox="0 0 24 24" style="left:356.3px;top:318px;width:24px;height:24px;"><path d="M12 3.200L2.500 8.600 12 14l9.500-5.400z" fill="#4a4a4a"/><path d="M3.600 12.300L12 17.100l8.400-4.800M3.600 15.900L12 20.700l8.400-4.800" stroke="#4a4a4a" stroke-width="1.500" fill="none"/></svg></div></section><section class="layer rightpanel" style=""><div class="bx" style="left:724.00px;top:81.00px;width:1196.00px;height:999.00px;background:#a8a8a8;"></div><div class="bx" style="left:724.00px;top:81.00px;width:1196.00px;height:125.00px;background:#00473f;"></div><h2 class="t" id="t3" style="left:753.55px;top:109.00px;font-size:30.00px;color:#adadad;letter-spacing:0.924px;">Map</h2><div class="bx" style="left:1571.00px;top:126.00px;width:187.00px;height:34.50px;background:#00433b;border-radius:18px;"></div><div class="bx" style="left:1572.00px;top:127.00px;width:74.00px;height:32.70px;background:#adadad;border-radius:17px;"></div><span class="t m" id="t4" style="left:1586.50px;top:136.00px;font-size:17.50px;color:#00473f;letter-spacing:0.490px;">Basic</span><span class="t" id="t5" style="left:1662.93px;top:135.00px;font-size:17.50px;color:#9ab2af;letter-spacing:0.177px;">Advanced</span><svg class="ic" viewBox="0 0 24 24" style="left:1794.00px;top:129.00px;width:30.00px;height:30.00px;fill:#adadad;"><path d="M12 2C6.48 2 2 6.48 2 12s4.48 10 10 10 10-4.48 10-10S17.52 2 12 2zm1 17h-2v-2h2v2zm2.07-7.75l-.9.92C13.45 12.9 13 13.5 13 15h-2v-.5c0-1.1.45-2.1 1.17-2.83l1.24-1.26c.37-.36.59-.86.59-1.41 0-1.1-.9-2-2-2s-2 .9-2 2H8c0-2.21 1.79-4 4-4s4 1.79 4 4c0 .88-.36 1.68-.93 2.25z"/></svg><svg class="ic" viewBox="0 0 24 24" style="left:1854.00px;top:129.00px;width:30.00px;height:30.00px;fill:#adadad;"><path d="M19 6.41L17.59 5 12 10.59 6.41 5 5 6.41 10.59 12 5 17.59 6.41 19 12 13.41 17.59 19 19 17.59 13.41 12z"/></svg><div class="bx" style="left:724.00px;top:206.00px;width:1196.00px;height:85.00px;background:#b0b0b0;"></div><svg class="ic" viewBox="0 0 24 24" style="left:1519.75px;top:247.25px;width:22.50px;height:22.50px;fill:#00473f;"><path d="M12 4.5C7 4.5 2.73 7.61 1 12c1.73 4.39 6 7.5 11 7.5s9.27-3.11 11-7.5c-1.73-4.39-6-7.5-11-7.5zM12 17c-2.76 0-5-2.24-5-5s2.24-5 5-5 5 2.24 5 5-2.24 5-5 5zm0-8c-1.66 0-3 1.34-3 3s1.34 3 3 3 3-1.34 3-3-1.34-3-3-3z"/></svg><span class="t m" id="t6" style="left:1547.60px;top:251.00px;font-size:17.50px;color:#00473f;letter-spacing:0.391px;">Preview</span><div class="bx" style="left:1638.30px;top:236.00px;width:125.30px;height:44.80px;border:1px solid #9c9c9c;border-radius:5px;"></div><svg class="ic" viewBox="0 0 24 24" style="left:1653.55px;top:246.75px;width:22.50px;height:22.50px;fill:#00473f;"><path d="M19 6.41L17.59 5 12 10.59 6.41 5 5 6.41 10.59 12 5 17.59 6.41 19 12 13.41 17.59 19 19 17.59 13.41 12z"/></svg><span class="t m" id="t7" style="left:1681.70px;top:251.00px;font-size:17.50px;color:#00473f;letter-spacing:0.600px;">Decline</span><div class="bx" style="left:1779.20px;top:236.00px;width:109.80px;height:45.00px;background:#00473f;border-radius:5px;"></div><svg class="ic" viewBox="0 0 24 24" style="left:1794.25px;top:247.25px;width:22.50px;height:22.50px;fill:#adadad;"><path d="M9 16.17L4.83 12l-1.42 1.41L9 19 21 7l-1.41-1.41z"/></svg><span class="t m" id="t8" style="left:1822.70px;top:251.00px;font-size:17.50px;color:#adadad;letter-spacing:0.475px;">Apply</span><div class="bx" style="left:744.00px;top:291.00px;width:1148.00px;height:222.00px;background:#b0b0b0;border-radius:0 0 6px 6px;"></div><div class="bx row" style="left:764.00px;top:331.80px;width:1108.00px;height:69.40px;"></div><div class="bx fld" style="left:1000.00px;top:342.00px;width:742.00px;height:50.00px;"></div><div class="bx fld" style="left:1752.00px;top:342.00px;width:50.00px;height:50.00px;"></div><svg class="ic" viewBox="1760 350 34 34" style="left:1760px;top:350px;width:34px;height:34px;"><path transform="translate(1765.03 354.17) scale(1.03 .943)" d="M11 3L5.5 17h2.25l1.12-3h6.25l1.12 3h2.25L13 3h-2zm-1.38 9L12 5.670 14.380 12H9.620z" fill="#4c4c4c"/><rect x="1768.300" y="372.800" width="17.700" height="2.900" fill="#4c4c4c"/></svg><div class="bx fld" style="left:1812.00px;top:342.00px;width:50.00px;height:50.00px;"></div><div class="bx checker light" style="left:1822.00px;top:352.00px;width:30.00px;height:30.00px;"></div><div class="bx row" style="left:764.00px;top:422.60px;width:1108.00px;height:70.20px;"></div><div class="bx fld" style="left:1000.00px;top:432.00px;width:742.00px;height:50.00px;"></div><svg class="ic" viewBox="0 0 24 24" style="left:1706.00px;top:443.50px;width:30.00px;height:30.00px;fill:#6e6e6e;"><path d="M7 10l5 5 5-5z"/></svg><div class="bx fld" style="left:1752.00px;top:432.00px;width:50.00px;height:50.00px;"></div><svg class="ic" viewBox="0 0 24 24" style="left:1762.00px;top:442.00px;width:30.00px;height:30.00px;fill:#9a9a9a;"><path d="M20.5 3l-.16.03L15 5.1 9 3 3.36 4.9c-.21.07-.36.25-.36.48V20.5c0 .28.22.5.5.5l.16-.03L9 18.9l6 2.1 5.64-1.9c.21-.07.36-.25.36-.48V3.5c0-.28-.22-.5-.5-.5zM15 19l-6-2.11V5l6 2.11V19z"/></svg><div class="bx fld" style="left:1812.00px;top:432.00px;width:50.00px;height:50.00px;"></div><div class="bx checker dark" style="left:1822.00px;top:442.00px;width:30.00px;height:30.00px;"></div><div class="bx" style="left:744.00px;top:533.00px;width:1148.00px;height:422.00px;background:#b0b0b0;border-radius:6px;"></div><div class="bx row" style="left:764.00px;top:597.00px;width:1108.00px;height:68.80px;"></div><div class="bx fld" style="left:1812.00px;top:606.00px;width:50.00px;height:50.00px;"></div><div class="bx row" style="left:764.00px;top:686.00px;width:1108.00px;height:69.20px;"></div><div class="bx" style="left:1581.00px;top:701.00px;width:123.00px;height:40.00px;background:#9b9b9b;border-radius:20px;"></div><span class="t" id="t9" style="left:1594.68px;top:712.00px;font-size:17.50px;color:#1c1c1c;letter-spacing:0.432px;">Data export</span><div class="bx" style="left:1713.80px;top:701.00px;width:148.40px;height:40.00px;background:#00473f;border-radius:20px;"></div><svg class="ic" viewBox="0 0 24 24" style="left:1726.50px;top:709.50px;width:24.00px;height:24.00px;fill:#adadad;"><path d="M9 16.17L4.83 12l-1.42 1.41L9 19 21 7l-1.41-1.41z"/></svg><span class="t" id="t10" style="left:1763.68px;top:712.00px;font-size:17.50px;color:#adadad;letter-spacing:0.351px;">Fullscreen</span><div class="bx row" style="left:764.00px;top:776.20px;width:1108.00px;height:68.40px;"></div><div class="bx fld" style="left:1730.40px;top:785.80px;width:131.40px;height:48.40px;"></div><span class="t" id="t11" style="left:1744.20px;top:803.00px;font-size:17.50px;color:#1c1c1c;letter-spacing:0.900px;">0px</span><div class="bx row" style="left:764.00px;top:865.00px;width:1108.00px;height:69.20px;"></div><div class="bx fld" style="left:1730.40px;top:875.40px;width:131.40px;height:49.00px;"></div><span class="t" id="t12" style="left:1744.20px;top:893.00px;font-size:17.50px;color:#1c1c1c;letter-spacing:0.900px;">8px</span><div class="bx" style="left:744.00px;top:975.40px;width:1148.00px;height:84.00px;background:#b0b0b0;border-radius:6px;"></div><span class="t m" id="t13" style="left:764.40px;top:1006.00px;font-size:20.00px;color:#141414;letter-spacing:0.600px;">Actions</span><div class="bx" style="left:1743.70px;top:995.40px;width:128.10px;height:43.80px;border:1px solid #9c9c9c;border-radius:5px;"></div><span class="t m" id="t14" style="left:1763.00px;top:1009.00px;font-size:17.50px;color:#00473f;letter-spacing:0.700px;">Add action</span><div class="bx" style="left:1912.00px;top:291.00px;width:8.00px;height:593.00px;background:#acacac;"></div><div class="bx" style="left:1912.00px;top:884.00px;width:8.00px;height:196.00px;background:#8e8e8e;"></div></section><header class="layer topbar" style=""><div class="bx" style="left:0.00px;top:0.00px;width:1920.00px;height:81.00px;background:#00473f;"></div><svg class="ic" viewBox="0 0 44 44" style="left:53px;top:18px;width:44px;height:44px;">
<g fill="none" stroke="#adadad" stroke-width="2" stroke-linecap="round">
<path d="M1.2 25.500A21 21 0 0 1 20.800 1.200"/>
<path d="M42.800 18.500A21 21 0 0 1 23.200 42.800"/>
<path d="M9 10.200l3.200 4.800M35 33.800l-3.200-4.800"/>
<path d="M16.500 10.200l2.700 3M27.500 8.600l-2.700 3M10.200 16.500l3 2.700M34.600 15.200l-3.200 2.900M9.200 28.600l3.200-2.800M33.800 27.500l-3-2.700M16.800 35.600l2.700-3M27.500 33.800l-2.700-3" stroke-width="2.100"/>
</g>
<circle cx="7.200" cy="7.200" r="3.300" fill="#00473f" stroke="#adadad" stroke-width="1.900"/>
<circle cx="36.800" cy="36.800" r="3.300" fill="#00473f" stroke="#adadad" stroke-width="1.900"/>
<path d="M23.800 9.400l10.800 10.800a2 2 0 0 1 0 2.800L23 34.400a2 2 0 0 1-2.800 0L9.400 23.600a2 2 0 0 1 0-2.800L21 9.400a2 2 0 0 1 2.800 0z" fill="#adadad"/>
<path d="M24 14.200c-2.600.6-4 2.200-3.600 3.800.3 1.300 2 1.500 2.400 2.600.4 1.200-1 2.200-3.400 2.600M22.800 20.600c1.400 2 1 4.400-.2 6.400-.6 1-1.400 1.800-2.200 2.600" fill="none" stroke="#00473f" stroke-width="1.700" stroke-linecap="round"/>
</svg><span class="t" id="t15" style="left:101.50px;top:26.00px;font-size:27.00px;color:#adadad;letter-spacing:0.550px;">ThingsBoard</span><span class="t" id="t16" style="left:186.50px;top:55.00px;font-size:11.80px;color:#adadad;letter-spacing:0.687px;">Professional</span><svg class="ic" viewBox="0 0 24 24" style="left:352.50px;top:26.00px;width:30.00px;height:30.00px;fill:#7f9f9a;"><path d="M3 13h8V3H3v10zm0 8h8v-6H3v6zm10 0h8V11h-8v10zm0-18v6h8V3h-8z"/></svg><span class="t" id="t17" style="left:388.00px;top:33.00px;font-size:22.50px;color:#7f9f9a;letter-spacing:-0.003px;">Dashboards</span><span class="t" id="t18" style="left:535.00px;top:33.00px;font-size:18.00px;color:#a3b5b2;letter-spacing:0.000px;">&gt;</span><svg class="ic" viewBox="0 0 24 24" style="left:572.00px;top:26.00px;width:30.00px;height:30.00px;fill:#7f9f9a;"><path d="M3 13h8V3H3v10zm0 8h8v-6H3v6zm10 0h8V11h-8v10zm0-18v6h8V3h-8z"/></svg><span class="t" id="t19" style="left:607.89px;top:33.00px;font-size:22.50px;color:#7f9f9a;letter-spacing:0.179px;">All</span><span class="t" id="t20" style="left:658.50px;top:33.00px;font-size:18.00px;color:#a3b5b2;letter-spacing:0.000px;">&gt;</span><svg class="ic" viewBox="0 0 24 24" style="left:695.50px;top:26.00px;width:30.00px;height:30.00px;fill:#adadad;"><path d="M3 13h8V3H3v10zm0 8h8v-6H3v6zm10 0h8V11h-8v10zm0-18v6h8V3h-8z"/></svg><span class="t" id="t21" style="left:731.50px;top:33.00px;font-size:22.50px;color:#adadad;letter-spacing:0.167px;">Gas stations map</span><svg class="ic" viewBox="0 0 24 24" style="left:1521.40px;top:26.20px;width:30.00px;height:30.00px;fill:#adadad;"><path d="M7 14H5v5h5v-2H7v-3zm-2-4h2V7h3V5H5v5zm12 7h-3v2h5v-5h-2v3zM14 5v2h3v3h2V5h-5z"/></svg><svg class="ic" viewBox="0 0 24 24" style="left:1581.40px;top:26.20px;width:30.00px;height:30.00px;fill:#adadad;"><path d="M12 22c1.1 0 2-.9 2-2h-4c0 1.1.89 2 2 2zm6-6v-5c0-3.07-1.64-5.64-4.5-6.32V4c0-.83-.67-1.5-1.5-1.5s-1.5.67-1.5 1.5v.68C7.63 5.36 6 7.92 6 11v5l-2 2v1h16v-1l-2-2z"/></svg><svg class="ic" viewBox="0 0 24 24" style="left:1636.30px;top:18.80px;width:45.00px;height:45.00px;fill:#adadad;"><path d="M12 2C6.48 2 2 6.48 2 12s4.48 10 10 10 10-4.48 10-10S17.52 2 12 2zm0 3c1.66 0 3 1.34 3 3s-1.34 3-3 3-3-1.34-3-3 1.34-3 3-3zm0 14.2c-2.5 0-4.71-1.28-6-3.22.03-1.99 4-3.08 6-3.08 1.99 0 5.97 1.09 6 3.08-1.29 1.94-3.5 3.22-6 3.22z"/></svg><span class="t" id="t22" style="left:1691.52px;top:20.00px;font-size:16.25px;color:#adadad;letter-spacing:-0.188px;">John Doe</span><span class="t" id="t23" style="left:1691.57px;top:44.00px;font-size:16.25px;color:#5f8c85;letter-spacing:-0.009px;">Tenant administrator</span><svg class="ic" viewBox="0 0 24 24" style="left:1854.00px;top:26.20px;width:30.00px;height:30.00px;fill:#adadad;"><path d="M12 8c1.1 0 2-.9 2-2s-.9-2-2-2-2 .9-2 2 .9 2 2 2zm0 2c-1.1 0-2 .9-2 2s.9 2 2 2 2-.9 2-2-.9-2-2-2zm0 6c-1.1 0-2 .9-2 2s.9 2 2 2 2-.9 2-2-.9-2-2-2z"/></svg></header><nav class="layer sidebar" style=""><div class="bx" style="left:0.00px;top:81.00px;width:313.00px;height:999.00px;background:#00473f;"></div><div class="bx" style="left:0.00px;top:80.50px;width:313.00px;height:1.00px;background:#00423b;"></div><div class="bx" style="left:0.00px;top:131.70px;width:313.00px;height:1.00px;background:#00423b;"></div><svg class="ic" viewBox="0 0 24 24" style="left:20.05px;top:94.75px;width:22.50px;height:22.50px;fill:#adadad;"><path d="M10 20v-6h4v6h5v-8h3L12 3 2 12h3v8z"/></svg><a class="t m" id="t24" style="left:52.00px;top:99.00px;font-size:17.60px;color:#adadad;letter-spacing:0.739px;">Home</a><div class="bx" style="left:0.00px;top:182.70px;width:313.00px;height:1.00px;background:#00423b;"></div><svg class="ic" viewBox="0 0 24 24" style="left:20.05px;top:145.75px;width:22.50px;height:22.50px;fill:#adadad;"><path d="M12 5.99L19.53 19H4.47L12 5.99M12 2L1 21h22L12 2zm1 14h-2v2h2v-2zm0-6h-2v4h2v-4z"/></svg><a class="t m" id="t25" style="left:53.00px;top:150.00px;font-size:17.60px;color:#adadad;letter-spacing:0.647px;">Alarms</a><div class="bx" style="left:0.00px;top:183.50px;width:313.00px;height:51.00px;background:#00544e;"></div><div class="bx" style="left:0.00px;top:233.70px;width:313.00px;height:1.00px;background:#00423b;"></div><svg class="ic" viewBox="0 0 24 24" style="left:20.05px;top:196.75px;width:22.50px;height:22.50px;fill:#adadad;"><path d="M3 13h8V3H3v10zm0 8h8v-6H3v6zm10 0h8V11h-8v10zm0-18v6h8V3h-8z"/></svg><a class="t m" id="t26" style="left:52.00px;top:201.00px;font-size:17.60px;color:#adadad;letter-spacing:0.471px;">Dashboards</a><div class="bx" style="left:0.00px;top:284.70px;width:313.00px;height:1.00px;background:#00423b;"></div><svg class="ic" viewBox="0 0 24 24" style="left:20.05px;top:247.75px;width:22.50px;height:22.50px;fill:#adadad;"><path d="M4 8h4V4H4v4zm6 12h4v-4h-4v4zm-6 0h4v-4H4v4zm0-6h4v-4H4v4zm6 0h4v-4h-4v4zm6-10v4h4V4h-4zm-6 4h4V4h-4v4zm6 6h4v-4h-4v4zm0 6h4v-4h-4v4z"/></svg><a class="t m" id="t27" style="left:52.00px;top:252.00px;font-size:17.60px;color:#adadad;letter-spacing:0.720px;">Solution templates</a><div class="bx" style="left:0.00px;top:335.70px;width:313.00px;height:1.00px;background:#00423b;"></div><svg class="ic" viewBox="0 0 24 24" style="left:20.05px;top:298.75px;width:22.50px;height:22.50px;fill:#adadad;"><path d="M12 2l-5.5 9h11zM17.5 13a4.5 4.5 0 1 0 0 9a4.5 4.5 0 1 0 0-9zM3 13.5h8v8H3z"/></svg><a class="t m" id="t28" style="left:52.00px;top:303.00px;font-size:17.60px;color:#adadad;letter-spacing:0.748px;">Entities</a><svg class="ic" viewBox="0 0 24 24" style="left:266.10px;top:294.20px;width:32.80px;height:32.80px;fill:#adadad;"><path d="M16.59 8.59L12 13.17 7.41 8.59 6 10l6 6 6-6z"/></svg><div class="bx" style="left:0.00px;top:386.70px;width:313.00px;height:1.00px;background:#00423b;"></div><svg class="ic" viewBox="0 0 24 24" style="left:20.05px;top:349.75px;width:22.50px;height:22.50px;fill:#adadad;"><path d="M20 7h-5V4c0-1.1-.9-2-2-2h-2c-1.1 0-2 .9-2 2v3H4c-1.1 0-2 .9-2 2v11c0 1.1.9 2 2 2h16c1.1 0 2-.9 2-2V9c0-1.1-.9-2-2-2zM9 12c.83 0 1.5.67 1.5 1.5S9.83 15 9 15s-1.5-.67-1.5-1.5S8.17 12 9 12zm3 6H6v-.75c0-1 2-1.5 3-1.5s3 .5 3 1.5V18zm1-9h-2V4h2v5zm5 7.5h-4V15h4v1.5zm0-3h-4V12h4v1.5z"/></svg><a class="t m" id="t29" style="left:52.00px;top:354.00px;font-size:17.60px;color:#adadad;letter-spacing:0.887px;">Profiles</a><svg class="ic" viewBox="0 0 24 24" style="left:266.10px;top:345.20px;width:32.80px;height:32.80px;fill:#adadad;"><path d="M16.59 8.59L12 13.17 7.41 8.59 6 10l6 6 6-6z"/></svg><div class="bx" style="left:0.00px;top:437.70px;width:313.00px;height:1.00px;background:#00423b;"></div><svg class="ic" viewBox="0 0 24 24" style="left:20.05px;top:400.75px;width:22.50px;height:22.50px;fill:#adadad;"><path d="M16.5 12c1.38 0 2.49-1.12 2.49-2.5S17.88 7 16.5 7C15.12 7 14 8.12 14 9.5s1.12 2.5 2.5 2.5zM9 11c1.66 0 2.99-1.34 2.99-3S10.66 5 9 5C7.34 5 6 6.34 6 8s1.34 3 3 3zm7.5 3c-1.83 0-5.5.92-5.5 2.75V19h11v-2.25c0-1.83-3.67-2.75-5.5-2.75zM9 13c-2.33 0-7 1.17-7 3.5V19h7v-2.25c0-.85.33-2.34 2.37-3.47C10.5 13.1 9.66 13 9 13z"/></svg><a class="t m" id="t30" style="left:52.59px;top:405.00px;font-size:17.60px;color:#adadad;letter-spacing:0.589px;">Customers</a><div class="bx" style="left:0.00px;top:488.70px;width:313.00px;height:1.00px;background:#00423b;"></div><svg class="ic" viewBox="0 0 24 24" style="left:20.05px;top:451.75px;width:22.50px;height:22.50px;fill:#adadad;"><path d="M12 2C6.48 2 2 6.48 2 12s4.48 10 10 10 10-4.48 10-10S17.52 2 12 2zm0 3c1.66 0 3 1.34 3 3s-1.34 3-3 3-3-1.34-3-3 1.34-3 3-3zm0 14.2c-2.5 0-4.71-1.28-6-3.22.03-1.99 4-3.08 6-3.08 1.99 0 5.97 1.09 6 3.08-1.29 1.94-3.5 3.22-6 3.22z"/></svg><a class="t m" id="t31" style="left:52.00px;top:456.00px;font-size:17.60px;color:#adadad;letter-spacing:0.325px;">Users</a><div class="bx" style="left:0.00px;top:539.70px;width:313.00px;height:1.00px;background:#00423b;"></div><svg class="ic" viewBox="0 0 24 24" style="left:20.05px;top:502.75px;width:22.50px;height:22.50px;fill:#adadad;"><path d="M19 3h-4.18C14.4 1.84 13.3 1 12 1s-2.4.84-2.82 2H5c-.14 0-.27.01-.4.04-.39.08-.74.28-1.01.55-.18.18-.33.4-.43.64-.1.23-.16.49-.16.77v14c0 .27.06.54.16.78s.25.45.43.64c.27.27.62.47 1.01.55.13.02.26.03.4.03h14c1.1 0 2-.9 2-2V5c0-1.1-.9-2-2-2zm-8 11.17l-1.41 1.42L6 12l3.59-3.59L11 9.83 8.83 12 11 14.17zm1-9.92c-.41 0-.75-.34-.75-.75s.34-.75.75-.75.75.34.75.75-.34.75-.75.75zm2.41 11.34L13 14.17 15.17 12 13 9.83l1.41-1.42L18 12l-3.59 3.59z"/></svg><a class="t m" id="t32" style="left:51.91px;top:507.00px;font-size:17.60px;color:#adadad;letter-spacing:0.712px;">Integrations center</a><svg class="ic" viewBox="0 0 24 24" style="left:266.10px;top:498.20px;width:32.80px;height:32.80px;fill:#adadad;"><path d="M16.59 8.59L12 13.17 7.41 8.59 6 10l6 6 6-6z"/></svg><div class="bx" style="left:0.00px;top:590.70px;width:313.00px;height:1.00px;background:#00423b;"></div><svg class="ic" viewBox="0 0 24 24" style="left:20.05px;top:553.75px;width:22.50px;height:22.50px;fill:#adadad;"><path d="M7.77 6.76L6.23 5.48.82 12l5.41 6.52 1.54-1.28L3.42 12l4.35-5.24zM7 13h2v-2H7v2zm10-2h-2v2h2v-2zm-6 2h2v-2h-2v2zm6.77-7.52l-1.54 1.28L20.58 12l-4.35 5.24 1.54 1.28L23.18 12l-5.41-6.52z"/></svg><a class="t m" id="t33" style="left:52.00px;top:558.00px;font-size:17.60px;color:#adadad;letter-spacing:0.430px;">Rule chains</a><div class="bx" style="left:0.00px;top:641.70px;width:313.00px;height:1.00px;background:#00423b;"></div><svg class="ic" viewBox="0 0 24 24" style="left:20.05px;top:604.75px;width:22.50px;height:22.50px;fill:#adadad;"><path d="M12 5c-3.87 0-7 3.13-7 7h2c0-2.76 2.24-5 5-5s5 2.24 5 5h2c0-3.87-3.13-7-7-7zm1 9.29c.88-.39 1.5-1.26 1.5-2.29 0-1.38-1.12-2.5-2.5-2.5S9.5 10.62 9.5 12c0 1.02.62 1.9 1.5 2.29v3.3L7.59 21 9 22.41l3-3 3 3L16.41 21 13 17.59v-3.3zM12 1C5.93 1 1 5.93 1 12h2c0-4.97 4.03-9 9-9s9 4.03 9 9h2c0-6.07-4.93-11-11-11z"/></svg><a class="t m" id="t34" style="left:52.00px;top:609.00px;font-size:17.60px;color:#adadad;letter-spacing:0.407px;">Edge management</a><svg class="ic" viewBox="0 0 24 24" style="left:266.10px;top:600.20px;width:32.80px;height:32.80px;fill:#adadad;"><path d="M16.59 8.59L12 13.17 7.41 8.59 6 10l6 6 6-6z"/></svg><div class="bx" style="left:0.00px;top:692.70px;width:313.00px;height:1.00px;background:#00423b;"></div><svg class="ic" viewBox="0 0 24 24" style="left:20.05px;top:655.75px;width:22.50px;height:22.50px;fill:#adadad;"><path d="M13.783 15.172l2.121-2.121 5.996 5.996-2.121 2.121zM17.5 10c1.93 0 3.5-1.57 3.5-3.5 0-.58-.16-1.12-.41-1.6l-2.7 2.7-1.49-1.49 2.7-2.7c-.48-.25-1.02-.41-1.6-.41C15.57 3 14 4.57 14 6.5c0 .41.08.8.21 1.16l-1.85 1.85-1.78-1.78.71-.71-1.41-1.41L12 3.49c-1.17-1.17-3.07-1.17-4.24 0L4.22 7.03l1.41 1.41H2.81l-.71.71 3.54 3.54.71-.71V9.15l1.41 1.41.71-.71 1.78 1.78-7.41 7.41 2.12 2.12L16.34 9.79c.36.13.75.21 1.16.21z"/></svg><a class="t m" id="t35" style="left:53.00px;top:660.00px;font-size:17.60px;color:#adadad;letter-spacing:0.496px;">Advanced features</a><svg class="ic" viewBox="0 0 24 24" style="left:266.10px;top:651.20px;width:32.80px;height:32.80px;fill:#adadad;"><path d="M16.59 8.59L12 13.17 7.41 8.59 6 10l6 6 6-6z"/></svg><div class="bx" style="left:0.00px;top:743.70px;width:313.00px;height:1.00px;background:#00423b;"></div><svg class="ic" viewBox="0 0 24 24" style="left:20.05px;top:706.75px;width:22.50px;height:22.50px;fill:#adadad;"><path d="M10 4H4c-1.1 0-1.99.9-1.99 2L2 18c0 1.1.9 2 2 2h16c1.1 0 2-.9 2-2V8c0-1.1-.9-2-2-2h-8l-2-2z"/></svg><a class="t m" id="t36" style="left:52.00px;top:711.00px;font-size:17.60px;color:#adadad;letter-spacing:0.413px;">Resources</a><svg class="ic" viewBox="0 0 24 24" style="left:266.10px;top:702.20px;width:32.80px;height:32.80px;fill:#adadad;"><path d="M16.59 8.59L12 13.17 7.41 8.59 6 10l6 6 6-6z"/></svg><div class="bx" style="left:0.00px;top:794.70px;width:313.00px;height:1.00px;background:#00423b;"></div><svg class="ic" viewBox="0 0 24 24" style="left:20.05px;top:757.75px;width:22.50px;height:22.50px;fill:#adadad;"><path d="M22 6.98V16c0 1.1-.9 2-2 2H6l-4 4V4c0-1.1.9-2 2-2h10.1c-.06.32-.1.66-.1 1 0 2.76 2.24 5 5 5 1.13 0 2.16-.39 3-1.02zM16 3c0 1.66 1.34 3 3 3s3-1.34 3-3-1.34-3-3-3-3 1.34-3 3z"/></svg><a class="t m" id="t37" style="left:52.00px;top:762.00px;font-size:17.60px;color:#adadad;letter-spacing:0.850px;">Notification center</a><div class="bx" style="left:0.00px;top:845.70px;width:313.00px;height:1.00px;background:#00423b;"></div><svg class="ic" viewBox="0 0 24 24" style="left:20.05px;top:808.75px;width:22.50px;height:22.50px;fill:#adadad;"><path d="M17 1.01L7 1c-1.1 0-2 .9-2 2v18c0 1.1.9 2 2 2h10c1.1 0 2-.9 2-2V3c0-1.1-.9-1.99-2-1.99zM17 19H7V5h10v14z"/></svg><a class="t m" id="t38" style="left:52.00px;top:813.00px;font-size:17.60px;color:#adadad;letter-spacing:0.728px;">Mobile center</a><div class="bx" style="left:0.00px;top:896.70px;width:313.00px;height:1.00px;background:#00423b;"></div><svg class="ic" viewBox="0 0 24 24" style="left:20.05px;top:859.75px;width:22.50px;height:22.50px;fill:#adadad;"><path d="M19 3H5c-1.1 0-2 .9-2 2v14c0 1.1.9 2 2 2h14c1.1 0 2-.9 2-2V5c0-1.1-.9-2-2-2zM9 17H7v-7h2v7zm4 0h-2V7h2v10zm4 0h-2v-4h2v4z"/></svg><a class="t m" id="t39" style="left:53.00px;top:864.00px;font-size:17.60px;color:#adadad;letter-spacing:0.337px;">API usage</a><div class="bx" style="left:0.00px;top:947.70px;width:313.00px;height:1.00px;background:#00423b;"></div><svg class="ic" viewBox="0 0 24 24" style="left:20.05px;top:910.75px;width:22.50px;height:22.50px;fill:#adadad;"><path d="M18 4V3c0-.55-.45-1-1-1H5c-.55 0-1 .45-1 1v4c0 .55.45 1 1 1h12c.55 0 1-.45 1-1V6h1v4H9v11c0 .55.45 1 1 1h2c.55 0 1-.45 1-1v-9h8V4h-3z"/></svg><a class="t m" id="t40" style="left:53.00px;top:915.00px;font-size:17.60px;color:#adadad;letter-spacing:0.562px;">White labeling</a><div class="bx" style="left:0.00px;top:998.70px;width:313.00px;height:1.00px;background:#00423b;"></div><svg class="ic" viewBox="0 0 24 24" style="left:20.05px;top:961.75px;width:22.50px;height:22.50px;fill:#adadad;"><path d="M19.14 12.94c.04-.3.06-.61.06-.94 0-.32-.02-.64-.07-.94l2.03-1.58c.18-.14.23-.41.12-.61l-1.92-3.32c-.12-.22-.37-.29-.59-.22l-2.39.96c-.5-.38-1.03-.7-1.62-.94l-.36-2.54c-.04-.24-.24-.41-.48-.41h-3.84c-.24 0-.43.17-.47.41l-.36 2.54c-.59.24-1.13.57-1.62.94l-2.39-.96c-.22-.08-.47 0-.59.22L2.74 8.87c-.12.21-.08.47.12.61l2.03 1.58c-.05.3-.09.63-.09.94s.02.64.07.94l-2.03 1.58c-.18.14-.23.41-.12.61l1.92 3.32c.12.22.37.29.59.22l2.39-.96c.5.38 1.03.7 1.62.94l.36 2.54c.05.24.24.41.48.41h3.84c.24 0 .44-.17.47-.41l.36-2.54c.59-.24 1.13-.56 1.62-.94l2.39.96c.22.08.47 0 .59-.22l1.92-3.32c.12-.22.07-.47-.12-.61l-2.01-1.58zM12 15.6c-1.98 0-3.6-1.62-3.6-3.6s1.62-3.6 3.6-3.6 3.6 1.62 3.6 3.6-1.62 3.6-3.6 3.6z"/></svg><a class="t m" id="t41" style="left:52.00px;top:966.00px;font-size:17.60px;color:#adadad;letter-spacing:0.787px;">Settings</a><div class="bx" style="left:0.00px;top:1049.70px;width:313.00px;height:1.00px;background:#00423b;"></div><svg class="ic" viewBox="0 0 24 24" style="left:20.05px;top:1012.75px;width:22.50px;height:22.50px;fill:#adadad;"><path d="M12 1L3 5v6c0 5.55 3.84 10.74 9 12 5.16-1.26 9-6.45 9-12V5l-9-4zm0 10.99h7c-.53 4.12-3.28 7.79-7 8.94V12H5V6.3l7-3.11v8.8z"/></svg><a class="t m" id="t42" style="left:52.00px;top:1017.00px;font-size:17.60px;color:#adadad;letter-spacing:0.571px;">Security</a><svg class="ic" viewBox="0 0 24 24" style="left:266.10px;top:1008.20px;width:32.80px;height:32.80px;fill:#adadad;"><path d="M16.59 8.59L12 13.17 7.41 8.59 6 10l6 6 6-6z"/></svg><div class="bx" style="left:251.60px;top:240.80px;width:48.70px;height:24.60px;background:#adadad;border-radius:13px;"></div><span class="t m" id="t43" style="left:258.00px;top:246.00px;font-size:15.00px;color:#00473f;letter-spacing:-0.500px;">NEW</span></nav><section class="layer dialogwrap" style=""><div class="bx dialog" style="left:397.00px;top:153.00px;width:1125.00px;height:776.00px;"></div><div class="bx" style="left:397.00px;top:153.00px;width:1125.00px;height:80.00px;background:#00695c;border-radius:5px 5px 0 0;"></div><h2 class="t m" id="t44" style="left:416.60px;top:180.00px;font-size:24.60px;color:#ffffff;letter-spacing:0.943px;">Map: Actions</h2><svg class="ic" viewBox="0 0 24 24" style="left:1467.00px;top:177.00px;width:30.00px;height:30.00px;fill:#ffffff;"><path d="M19 6.41L17.59 5 12 10.59 6.41 5 5 6.41 10.59 12 5 17.59 6.41 19 12 13.41 17.59 19 19 17.59 13.41 12z"/></svg><span class="t" id="t45" style="left:427.89px;top:265.00px;font-size:25.00px;color:#212121;letter-spacing:0.452px;">Actions</span><svg class="ic" viewBox="0 0 24 24" style="left:1461.70px;top:262.70px;width:30.00px;height:30.00px;fill:#5c5c5c;"><path d="M15.5 14h-.79l-.28-.27C15.41 12.59 16 11.11 16 9.5 16 5.91 13.09 3 9.5 3S3 5.91 3 9.5 5.91 16 9.5 16c1.61 0 3.09-.59 4.23-1.57l.27.28v.79l5 4.99L20.49 19l-4.99-5zm-6 0C7.01 14 5 11.99 5 9.5S7.01 5 9.5 5 14 7.01 14 9.5 11.99 14 9.5 14z"/></svg><span class="t m" id="t46" style="left:477.30px;top:343.00px;font-size:17.50px;color:#212121;letter-spacing:0.157px;">Action source</span><svg class="ic" viewBox="590 340 20 20" style="left:590px;top:340px;width:20px;height:20px;"><path d="M600.400 358V347M595.500 351.700L600.400 346.500L605.300 351.700" stroke="#757575" stroke-width="3" fill="none"/></svg><span class="t m" id="t47" style="left:665.00px;top:343.00px;font-size:17.50px;color:#212121;letter-spacing:0.085px;">Name</span><span class="t m" id="t48" style="left:918.13px;top:343.00px;font-size:17.50px;color:#212121;letter-spacing:0.691px;">Icon</span><span class="t m" id="t49" style="left:1004.30px;top:343.00px;font-size:17.50px;color:#212121;letter-spacing:-0.240px;">Type</span><div class="bx" style="left:397.00px;top:387.00px;width:1125.00px;height:1.00px;background:#e0e0e0;"></div><span class="t" id="t50" style="left:877.70px;top:577.00px;font-size:20.50px;color:#616161;letter-spacing:0.634px;">No actions found</span><div class="bx" style="left:397.00px;top:792.00px;width:1125.00px;height:1.00px;background:#e0e0e0;"></div><span class="t" id="t51" style="left:1011.68px;top:820.00px;font-size:15.60px;color:#3d3d3d;letter-spacing:0.287px;">Items per page:</span><div class="bx" style="left:1133.30px;top:801.30px;width:104.50px;height:52.50px;border:1px solid #7a7a7a;border-radius:5px;"></div><span class="t" id="t52" style="left:1152.95px;top:820.00px;font-size:15.60px;color:#3d3d3d;letter-spacing:0.047px;">10</span><svg class="ic" viewBox="0 0 24 24" style="left:1196.70px;top:813.80px;width:30.00px;height:30.00px;fill:#6b6b6b;"><path d="M7 10l5 5 5-5z"/></svg><span class="t" id="t53" style="left:1282.95px;top:820.00px;font-size:15.60px;color:#3d3d3d;letter-spacing:0.471px;">1 – 0 of 0</span><svg class="ic" viewBox="0 0 24 24" style="left:1406.50px;top:812.80px;width:30.00px;height:30.00px;fill:#c4c4c4;"><path d="M15.41 7.41L14 6l-6 6 6 6 1.41-1.41L10.83 12z"/></svg><svg class="ic" viewBox="0 0 24 24" style="left:1466.50px;top:812.80px;width:30.00px;height:30.00px;fill:#c4c4c4;"><path d="M10 6L8.59 7.41 13.17 12l-4.58 4.59L10 18l6-6z"/></svg><span class="t m" id="t54" style="left:1353.59px;top:888.00px;font-size:17.50px;color:#00695c;letter-spacing:0.426px;">Cancel</span><div class="bx" style="left:1432.00px;top:874.00px;width:80.00px;height:45.00px;background:#e0e0e0;border-radius:5px;"></div><span class="t m" id="t55" style="left:1451.50px;top:888.00px;font-size:17.50px;color:#8c8c8c;letter-spacing:-0.007px;">Save</span></section><aside class="layer overlay" style=""><div class="bx" style="left:1369.00px;top:208.30px;width:97.00px;height:29.50px;background:#616161;border-radius:5px;"></div><span class="t" id="t56" style="left:1379.49px;top:216.00px;font-size:14.50px;color:#ffffff;letter-spacing:0.880px;">Add action</span><div class="bx" style="left:1385.20px;top:244.00px;width:65.40px;height:65.40px;background:#f3f4f4;border:3px solid #fbc12f;border-radius:50%;box-shadow:0 0 4px rgba(251,193,47,.6);"></div><svg class="ic" viewBox="0 0 24 24" style="left:1402.00px;top:262.80px;width:30.00px;height:30.00px;fill:#5c5c5c;"><path d="M19 13h-6v6h-2v-6H5v-2h6V5h2v6h6v2z"/></svg><svg class="ic" viewBox="0 0 20 70" style="left:1383.4px;top:288px;width:20px;height:70px;"><path d="M10 0.600V63" stroke="#fbc12f" stroke-width="2.800" stroke-dasharray="21 4.800" fill="none"/><circle cx="10" cy="9" r="5.300" fill="#fbc12f"/></svg><div class="bx" style="left:1343.20px;top:318.30px;width:29.60px;height:34.70px;background:#fff;border:3px solid #fbc12f;border-radius:7px 7px 0 0;box-shadow:0 0 4px rgba(251,193,47,.7);"></div><span class="t" id="t57" style="left:1349.53px;top:323.00px;font-size:27.50px;color:#111;letter-spacing:0.000px;">2</span><div class="bx" style="left:1320.50px;top:350.20px;width:347.50px;height:75.40px;background:#fff2df;border:3px solid #fbc12f;border-radius:9px;box-shadow:0 0 4px rgba(251,193,47,.7);"></div><span class="t" id="t58" style="left:1328.01px;top:359.00px;font-size:25.50px;color:#111;letter-spacing:1.129px;">Click the "plus" icon button</span><span class="t" id="t59" style="left:1328.93px;top:394.00px;font-size:25.50px;color:#111;letter-spacing:1.179px;">to add new action</span><svg class="ic" viewBox="1400 285 36 36" style="left:1400px;top:285px;width:36px;height:36px;">
<path d="M1415.300 311.200L1415.300 309.500L1413 305.500L1410.600 301.900C1410 300.300 1410.600 299.500 1412.800 299.400L1414.400 301.600L1414.400 292C1414.400 289.700 1417.700 289.700 1417.700 292L1417.700 295.400C1419 295 1420.800 295.300 1420.800 296.500C1422 296.300 1423.600 296.700 1423.600 297.700C1425 297.500 1426.800 298.300 1426.800 300.100L1426.800 305.200L1425.600 309L1425.200 311.200Z" fill="#fff" stroke="#0c0c0c" stroke-width="1.250" stroke-linejoin="round"/>
<path d="M1414.400 301.600V304.200M1417.700 295.400V299.600M1420.800 296.500V299.700M1423.600 297.700V300.700" stroke="#0c0c0c" stroke-width="1.200" stroke-linecap="round" fill="none"/>
<rect x="1415.300" y="311.400" width="9.700" height="5.300" fill="#fbc12f" stroke="#0c0c0c" stroke-width="1.250"/><rect x="1421.300" y="313.200" width="1.700" height="1.700" fill="#0c0c0c"/>
</svg></aside>
</body></html>
